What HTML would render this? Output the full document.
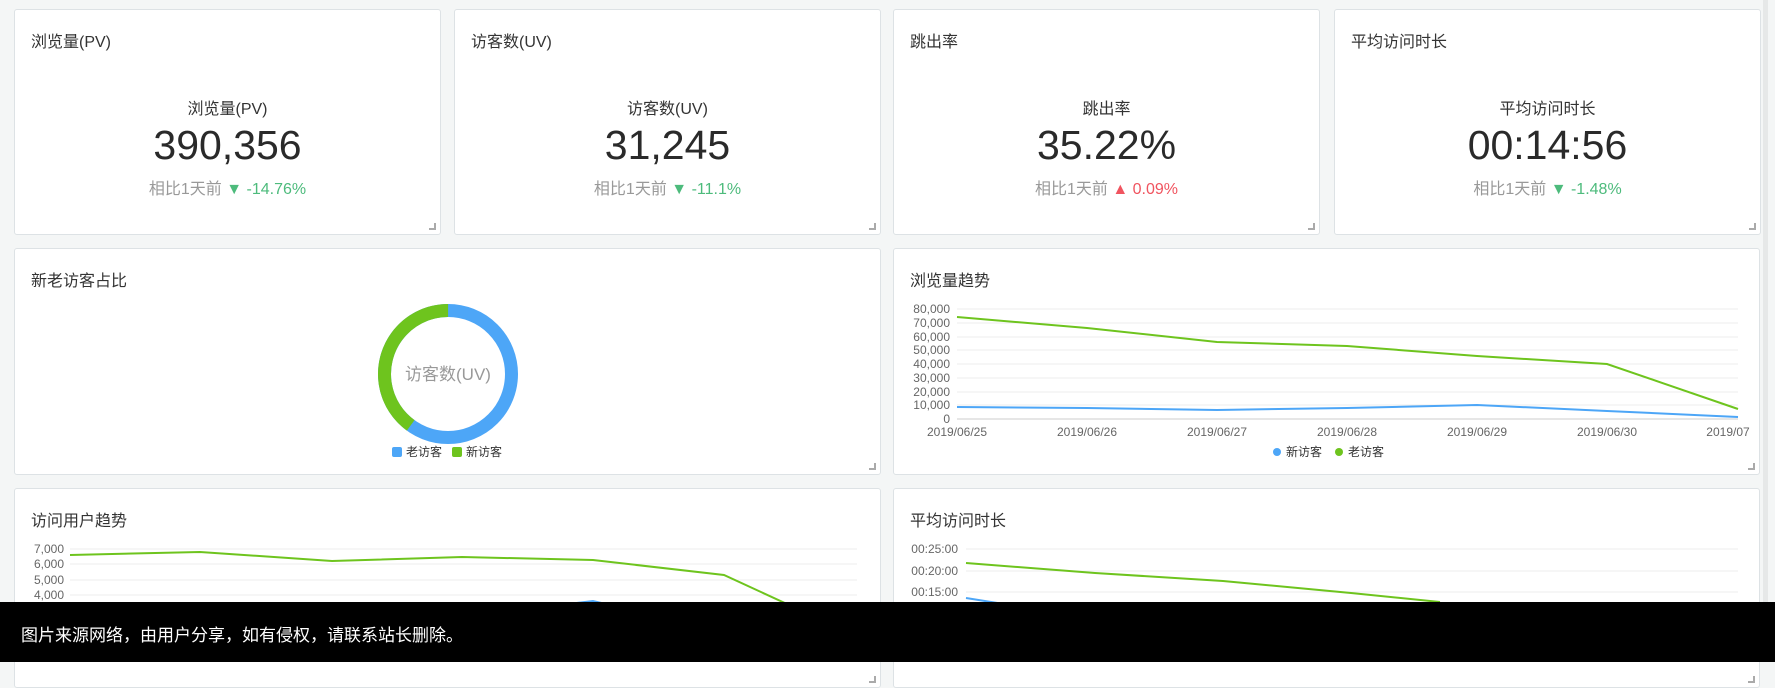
<!DOCTYPE html>
<html><head><meta charset="utf-8"><style>
*{margin:0;padding:0;box-sizing:border-box}
body{width:1775px;height:662px;overflow:hidden;background:#f4f6f6;font-family:"Liberation Sans","Noto Sans CJK SC",sans-serif;position:relative;color:#333}
.c{position:absolute;background:#fff;border:1px solid #dde2e5;border-radius:3px}
.c:after{content:"";position:absolute;right:4px;bottom:4px;width:5px;height:5px;border-right:2px solid #aaa;border-bottom:2px solid #aaa}
.t{position:absolute;left:16px;top:18px;font-size:16px;color:#333}
.lab{position:absolute;left:0;right:0;top:85px;text-align:center;font-size:16px;color:#333}
.num{position:absolute;left:0;right:0;top:112px;text-align:center;font-size:41px;color:#2a2a2a}
.cmp{position:absolute;left:0;right:0;top:165px;text-align:center;font-size:16px;color:#999}
.g{color:#4dbb7c}.r{color:#f0545f}
svg{position:absolute;left:0;top:0}
.bar{position:absolute;left:0;top:602px;width:1775px;height:60px;background:#000;color:#fff;font-size:17px;padding:19px 0 0 21px}
.sb{position:absolute;right:7px;top:0;width:5px;height:602px;background:#e6e8e8}
</style></head><body>
<div class="c" style="left:14px;top:9px;width:427px;height:226px"><div class="t">浏览量(PV)</div><div class="lab">浏览量(PV)</div><div class="num">390,356</div><div class="cmp">相比1天前 <span class="g">▼ -14.76%</span></div></div>
<div class="c" style="left:454px;top:9px;width:427px;height:226px"><div class="t">访客数(UV)</div><div class="lab">访客数(UV)</div><div class="num">31,245</div><div class="cmp">相比1天前 <span class="g">▼ -11.1%</span></div></div>
<div class="c" style="left:893px;top:9px;width:427px;height:226px"><div class="t">跳出率</div><div class="lab">跳出率</div><div class="num">35.22%</div><div class="cmp">相比1天前 <span class="r">▲ 0.09%</span></div></div>
<div class="c" style="left:1334px;top:9px;width:427px;height:226px"><div class="t">平均访问时长</div><div class="lab">平均访问时长</div><div class="num">00:14:56</div><div class="cmp">相比1天前 <span class="g">▼ -1.48%</span></div></div>

<div class="c" style="left:14px;top:248px;width:867px;height:227px"><div class="t">新老访客占比</div></div>
<div class="c" style="left:893px;top:248px;width:867px;height:227px"><div class="t">浏览量趋势</div></div>
<div class="c" style="left:14px;top:488px;width:867px;height:200px"><div class="t">访问用户趋势</div></div>
<div class="c" style="left:893px;top:488px;width:867px;height:200px"><div class="t">平均访问时长</div></div>
<div class="sb"></div>

<svg width="1775" height="662" font-family="Liberation Sans,Noto Sans CJK SC,sans-serif">
<circle cx="448" cy="374" r="63.5" fill="none" stroke="#4da6f7" stroke-width="13"/>
<circle cx="448" cy="374" r="63.5" fill="none" stroke="#6ec41e" stroke-width="13" stroke-dasharray="159.6 399" transform="rotate(-234 448 374)"/>
<text x="448" y="380" text-anchor="middle" font-size="17" fill="#999">访客数(UV)</text>
<rect x="392" y="447" width="10" height="10" rx="2" fill="#4da6f7"/><text x="406" y="456" font-size="12" fill="#333">老访客</text>
<rect x="452" y="447" width="10" height="10" rx="2" fill="#6ec41e"/><text x="466" y="456" font-size="12" fill="#333">新访客</text>

<g stroke="#eceeee" stroke-width="1">
<line x1="957" x2="1738" y1="309" y2="309"/><line x1="957" x2="1738" y1="323" y2="323"/><line x1="957" x2="1738" y1="337" y2="337"/><line x1="957" x2="1738" y1="350" y2="350"/><line x1="957" x2="1738" y1="364" y2="364"/><line x1="957" x2="1738" y1="378" y2="378"/><line x1="957" x2="1738" y1="392" y2="392"/><line x1="957" x2="1738" y1="405" y2="405"/>
</g>
<line x1="957" x2="1738" y1="419" y2="419" stroke="#ccc"/>
<g font-size="12" fill="#666" text-anchor="end">
<text x="950" y="313">80,000</text><text x="950" y="327">70,000</text><text x="950" y="341">60,000</text><text x="950" y="354">50,000</text><text x="950" y="368">40,000</text><text x="950" y="382">30,000</text><text x="950" y="396">20,000</text><text x="950" y="409">10,000</text><text x="950" y="423">0</text>
</g>
<g font-size="12" fill="#666" text-anchor="middle">
<text x="957" y="436">2019/06/25</text><text x="1087" y="436">2019/06/26</text><text x="1217" y="436">2019/06/27</text><text x="1347" y="436">2019/06/28</text><text x="1477" y="436">2019/06/29</text><text x="1607" y="436">2019/06/30</text><text x="1728" y="436">2019/07</text>
</g>
<polyline fill="none" stroke="#6ec41e" stroke-width="2" points="957,317 1087,328 1217,342 1347,346 1477,356 1607,364 1738,409"/>
<polyline fill="none" stroke="#4da6f7" stroke-width="2" points="957,407 1087,408 1217,410 1347,408 1477,405 1607,411 1738,417"/>
<circle cx="1277" cy="452" r="4" fill="#4da6f7"/><text x="1286" y="456" font-size="12" fill="#333">新访客</text>
<circle cx="1339" cy="452" r="4" fill="#6ec41e"/><text x="1348" y="456" font-size="12" fill="#333">老访客</text>

<g stroke="#eceeee"><line x1="70" x2="857" y1="549" y2="549"/><line x1="70" x2="857" y1="564" y2="564"/><line x1="70" x2="857" y1="580" y2="580"/><line x1="70" x2="857" y1="595" y2="595"/></g>
<g font-size="12" fill="#666" text-anchor="end"><text x="64" y="553">7,000</text><text x="64" y="568">6,000</text><text x="64" y="584">5,000</text><text x="64" y="599">4,000</text></g>
<polyline fill="none" stroke="#6ec41e" stroke-width="2" points="70,555 200,552 332,561 462,557 593,560 724,575 800,610"/>
<polyline fill="none" stroke="#4da6f7" stroke-width="2" points="560,605 593,601 610,605"/>
<g stroke="#eceeee"><line x1="966" x2="1738" y1="549" y2="549"/><line x1="966" x2="1738" y1="571" y2="571"/><line x1="966" x2="1738" y1="592" y2="592"/></g>
<g font-size="12" fill="#666" text-anchor="end"><text x="958" y="553">00:25:00</text><text x="958" y="575">00:20:00</text><text x="958" y="596">00:15:00</text></g>
<polyline fill="none" stroke="#6ec41e" stroke-width="2" points="966,563 1095,573 1223,581 1351,593 1440,602"/>
<polyline fill="none" stroke="#4da6f7" stroke-width="2" points="966,598 1010,605"/>
</svg>
<div class="bar">图片来源网络，由用户分享，如有侵权，请联系站长删除。</div>
</body></html>
